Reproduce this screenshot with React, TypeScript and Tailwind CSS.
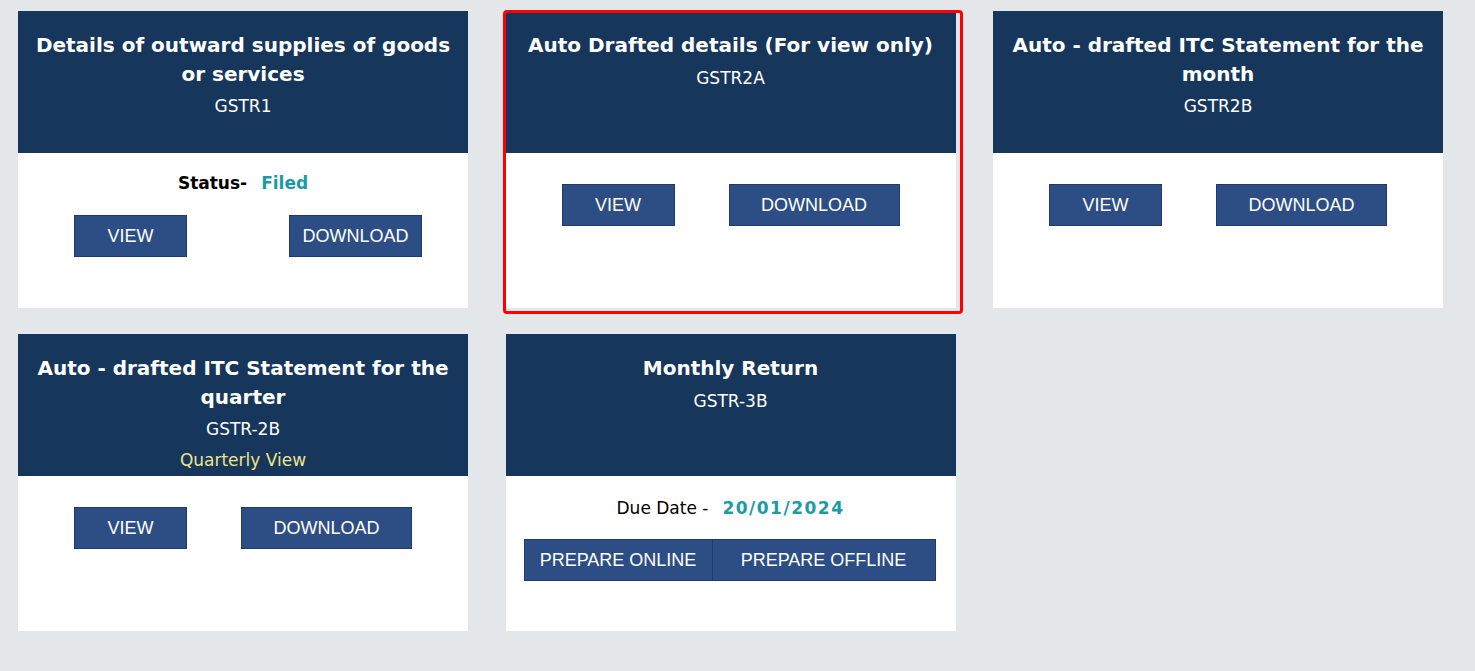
import type { ReactNode } from "react";

const HEAD_FONT = { fontFamily: '"DejaVu Sans", Verdana, sans-serif' };

function Btn({ label, w }: { label: string; w: string }) {
  return (
    <button
      className={`${w} h-[42px] bg-[#2c4e85] border border-[#1f3b6b] text-white text-[18px] font-['Liberation_Sans',Arial,sans-serif] leading-none`}
    >
      {label}
    </button>
  );
}

interface CardProps {
  title: ReactNode;
  code: string;
  extra?: string;
  headH?: string;
  headPt?: string;
  children: ReactNode;
}

function Card({ title, code, extra, headH = "h-[142px]", headPt = "pt-5", children }: CardProps) {
  return (
    <div className="w-[450px] bg-white" style={HEAD_FONT}>
      <div className={`${headH} ${headPt} bg-[#16365c] px-4 text-center text-white`}>
        <h3 className="text-[20px] font-bold leading-[1.42857]">{title}</h3>
        <p className="mt-[6px] text-[17px] leading-[24px]">{code}</p>
        {extra && <p className="mt-[7px] text-[17px] leading-[24px] text-[#efe38a]">{extra}</p>}
      </div>
      <div className="h-[155px]">{children}</div>
    </div>
  );
}

function ViewDownload({ gap = "gap-[54px]", dlW = "w-[171px]" }: { gap?: string; dlW?: string }) {
  return (
    <div className={`flex pl-[56px] ${gap}`}>
      <Btn label="VIEW" w="w-[113px]" />
      <Btn label="DOWNLOAD" w={dlW} />
    </div>
  );
}

export default function App() {
  return (
    <div className="min-h-screen bg-[#e4e7ea] pl-[18px] pt-[11px]">
      <div className="grid grid-cols-[450px_450px_450px] gap-x-[37.5px] gap-y-[26px] items-start">
        <Card title="Details of outward supplies of goods or services" code="GSTR1">
          <div className="pt-[18px] flex justify-center gap-[14px] text-[17px] font-bold leading-[24px]">
            <span className="text-black">Status-</span>
            <span className="text-[#1a9ba6]">Filed</span>
          </div>
          <div className="mt-[20px]">
            <ViewDownload gap="gap-[102px]" dlW="w-[133px]" />
          </div>
        </Card>

        <div className="relative mt-[2px]">
          <div className="absolute -left-[3px] -top-[3px] -right-[7px] -bottom-[6px] border-[3px] border-[#ff0000] rounded-[4px] pointer-events-none" />
          <Card title="Auto Drafted details (For view only)" code="GSTR2A" headH="h-[140px]" headPt="pt-[18px]">
            <div className="pt-[31px]">
              <ViewDownload />
            </div>
          </Card>
        </div>

        <Card title="Auto - drafted ITC Statement for the month" code="GSTR2B">
          <div className="pt-[31px]">
            <ViewDownload />
          </div>
        </Card>

        <Card title="Auto - drafted ITC Statement for the quarter" code="GSTR-2B" extra="Quarterly View">
          <div className="pt-[31px]">
            <ViewDownload />
          </div>
        </Card>

        <Card title="Monthly Return" code="GSTR-3B">
          <div className="pt-[20px] flex justify-center gap-[14px] text-[17px] leading-[24px]">
            <span className="text-black">Due Date -</span>
            <span className="text-[#1a9ba6] font-bold tracking-[1.5px]">20/01/2024</span>
          </div>
          <div className="mt-[19px] flex pl-[18px]">
            <Btn label="PREPARE ONLINE" w="w-[189px]" />
            <Btn label="PREPARE OFFLINE" w="w-[224px] -ml-px" />
          </div>
        </Card>
      </div>
    </div>
  );
}
